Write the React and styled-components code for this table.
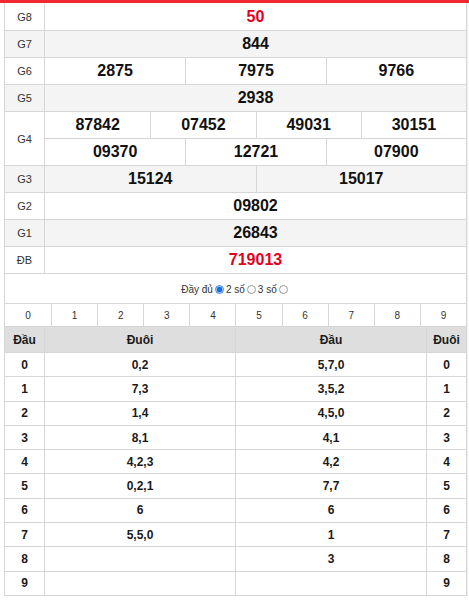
import React from "react";
import styled, { createGlobalStyle } from "styled-components";

const GlobalStyle = createGlobalStyle`
  html, body { margin: 0; padding: 0; background: #fff; }
  body { font-family: "Liberation Sans", Arial, sans-serif; color: #222; }
  *, *::before, *::after { box-sizing: border-box; }
`;

const LINE = "#d6d6d6";

const TopBar = styled.div`
  height: 3px;
  background: #ee2a30;
`;

const Board = styled.div`
  margin: 0 2px 0 4px;
  padding-top: 1px;
  border-left: 1px solid ${LINE};
  border-right: 1px solid ${LINE};
  box-shadow: 1px 0 1px rgba(0, 0, 0, 0.06);
`;

const PrizeRow = styled.div`
  display: grid;
  grid-template-columns: 40px 1fr;
  border-bottom: 1px solid ${LINE};
  background: ${(p) => (p.$alt ? "#f4f4f4" : "#fff")};
`;

const PrizeLabel = styled.div`
  display: flex;
  align-items: center;
  justify-content: center;
  border-right: 1px solid ${LINE};
  font-size: 11px;
  color: #333;
`;

const ValueStack = styled.div`
  display: flex;
  flex-direction: column;
`;

const ValueLine = styled.div`
  display: grid;
  grid-template-columns: repeat(${(p) => p.$n}, 1fr);
  height: 26px;
  & + & {
    border-top: 1px solid ${LINE};
    height: 27px;
  }
`;

const Value = styled.div`
  display: flex;
  align-items: center;
  justify-content: center;
  font-size: 16px;
  font-weight: bold;
  color: ${(p) => (p.$red ? "#e3001b" : "#111")};
  & + & {
    border-left: 1px solid ${LINE};
  }
`;

const RadioBar = styled.div`
  height: 29px;
  display: flex;
  align-items: center;
  justify-content: center;
  font-size: 10px;
  color: #333;
  padding-top: 1px;
`;

const RadioItem = styled.label`
  display: inline-flex;
  align-items: center;
  gap: 2px;
  margin-right: 2px;
`;

const Radio = styled.input.attrs({ type: "radio" })`
  appearance: none;
  width: 9px;
  height: 9px;
  margin: 0;
  border-radius: 50%;
  border: 1px solid ${(p) => (p.checked ? "#3b82e6" : "#9a9a9a")};
  background: ${(p) =>
    p.checked
      ? "radial-gradient(circle, #1a6fe0 0 2.6px, #cfe0fb 3.2px)"
      : "#fff"};
`;

const NumberRow = styled.div`
  display: grid;
  grid-template-columns: repeat(10, 1fr);
  border-top: 1px solid ${LINE};
  border-bottom: 1px solid ${LINE};
`;

const NumberCell = styled.div`
  height: 22px;
  display: flex;
  align-items: center;
  justify-content: center;
  font-size: 10px;
  color: #333;
  & + & {
    border-left: 1px solid ${LINE};
  }
`;

const LotoRow = styled.div`
  display: grid;
  grid-template-columns: 40px 1fr 1fr 39px;
  height: ${(p) => (p.$head ? "26px" : "24.3px")};
  border-bottom: 1px solid ${LINE};
  background: ${(p) => (p.$head ? "#dedede" : "#fff")};
`;

const LotoCell = styled.div`
  display: flex;
  align-items: center;
  justify-content: center;
  font-size: 12px;
  font-weight: bold;
  color: #1a1a1a;
  border-right: 1px solid ${LINE};
  &:last-child {
    border-right: none;
  }
`;

const prizes = [
  { label: "G8", lines: [["50"]], red: true },
  { label: "G7", lines: [["844"]] },
  { label: "G6", lines: [["2875", "7975", "9766"]] },
  { label: "G5", lines: [["2938"]] },
  {
    label: "G4",
    lines: [
      ["87842", "07452", "49031", "30151"],
      ["09370", "12721", "07900"],
    ],
  },
  { label: "G3", lines: [["15124", "15017"]] },
  { label: "G2", lines: [["09802"]] },
  { label: "G1", lines: [["26843"]] },
  { label: "ĐB", lines: [["719013"]], red: true },
];

const dau = ["0,2", "7,3", "1,4", "8,1", "4,2,3", "0,2,1", "6", "5,5,0", "", ""];
const duoi = ["5,7,0", "3,5,2", "4,5,0", "4,1", "4,2", "7,7", "6", "1", "3", ""];

export default function App() {
  return (
    <>
      <GlobalStyle />
      <TopBar />
      <Board>
        {prizes.map((p, i) => (
          <PrizeRow key={p.label} $alt={i % 2 === 1}>
            <PrizeLabel>{p.label}</PrizeLabel>
            <ValueStack>
              {p.lines.map((line, j) => (
                <ValueLine key={j} $n={line.length}>
                  {line.map((v, k) => (
                    <Value key={k} $red={p.red}>
                      {v}
                    </Value>
                  ))}
                </ValueLine>
              ))}
            </ValueStack>
          </PrizeRow>
        ))}

        <RadioBar>
          <RadioItem>
            Đầy đủ <Radio name="mode" defaultChecked checked readOnly />
          </RadioItem>
          <RadioItem>
            2 số <Radio name="mode2" checked={false} readOnly />
          </RadioItem>
          <RadioItem>
            3 số <Radio name="mode3" checked={false} readOnly />
          </RadioItem>
        </RadioBar>

        <NumberRow>
          {Array.from({ length: 10 }, (_, i) => (
            <NumberCell key={i}>{i}</NumberCell>
          ))}
        </NumberRow>

        <LotoRow $head>
          <LotoCell>Đầu</LotoCell>
          <LotoCell>Đuôi</LotoCell>
          <LotoCell>Đầu</LotoCell>
          <LotoCell>Đuôi</LotoCell>
        </LotoRow>
        {dau.map((d, i) => (
          <LotoRow key={i}>
            <LotoCell>{i}</LotoCell>
            <LotoCell>{d}</LotoCell>
            <LotoCell>{duoi[i]}</LotoCell>
            <LotoCell>{i}</LotoCell>
          </LotoRow>
        ))}
      </Board>
    </>
  );
}
